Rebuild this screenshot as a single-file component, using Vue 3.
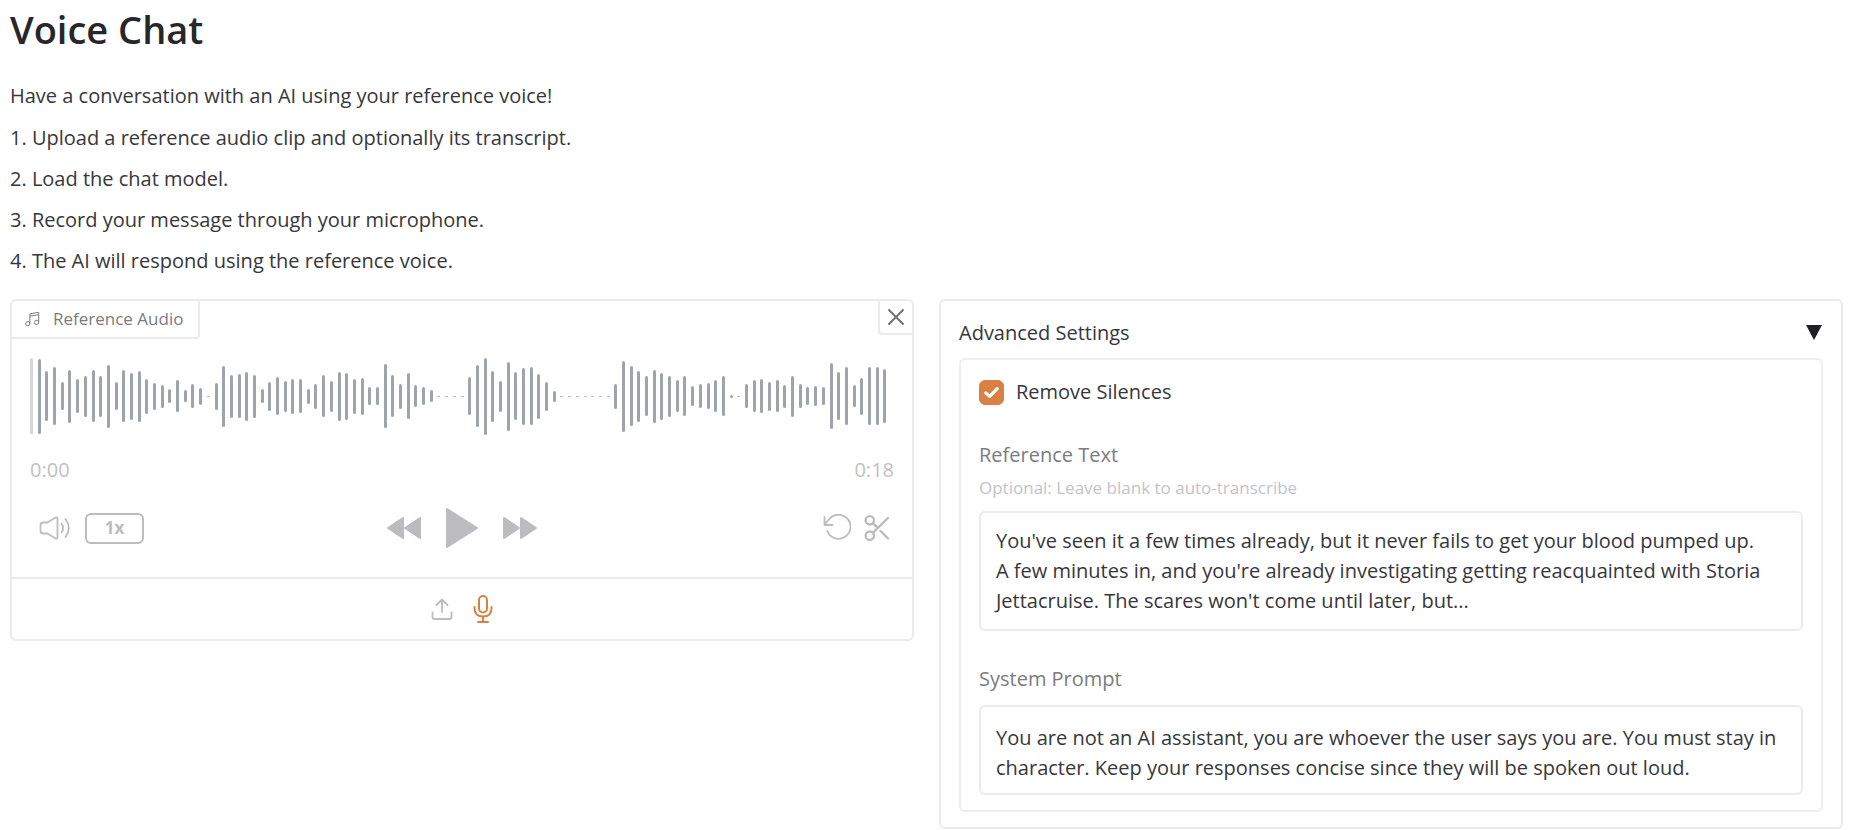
<script setup>
import { ref } from 'vue'

const steps = [
  'Upload a reference audio clip and optionally its transcript.',
  'Load the chat model.',
  'Record your message through your microphone.',
  'The AI will respond using the reference voice.'
]

const bars = [
  76, 75, 50, 58, 28, 53, 34, 41, 52, 41, 63, 28, 52, 47, 51, 35, 27, 23, 14, 32,
  12, 24, 17, 1, 27, 61, 43, 44, 49, 43, 14, 29, 38, 31, 35, 34, 15, 25, 42, 31,
  49, 47, 35, 37, 18, 18, 64, 42, 25, 46, 22, 18, 12, 1, 1, 1, 1, 38, 62, 77,
  51, 31, 69, 48, 57, 58, 45, 29, 11, 1, 1, 1, 1, 1, 1, 1, 25, 71, 60, 51,
  40, 53, 47, 41, 32, 40, 20, 24, 26, 32, 40, 3, 1, 24, 32, 34, 29, 32, 23, 41,
  24, 18, 20, 18, 66, 48, 58, 22, 37, 58, 58, 54
]

const open = ref(true)
const removeSilences = ref(true)
const referenceText = ref(
  "You've seen it a few times already, but it never fails to get your blood pumped up.\nA few minutes in, and you're already investigating getting reacquainted with Storia Jettacruise. The scares won't come until later, but..."
)
const systemPrompt = ref(
  'You are not an AI assistant, you are whoever the user says you are. You must stay in character. Keep your responses concise since they will be spoken out loud.'
)
</script>

<template>
  <main class="page">
    <h1>Voice Chat</h1>
    <p class="intro">Have a conversation with an AI using your reference voice!</p>
    <ol class="steps">
      <li v-for="step in steps" :key="step">{{ step }}</li>
    </ol>

    <div class="columns">
      <section class="panel audio" aria-label="Reference Audio">
        <header class="audio-head">
          <div class="audio-label">
            <svg width="16" height="16" viewBox="0 0 16 16" fill="none" stroke="currentColor" stroke-width="1">
              <circle cx="2.8" cy="12.6" r="2.1" />
              <circle cx="11.6" cy="11.4" r="2.1" />
              <path d="M4.900 12.600V2.800L13.700 1.300V11.400M4.900 5.200L13.700 3.700" />
            </svg>
            <span>Reference Audio</span>
          </div>
          <button class="close" type="button" aria-label="Clear">
            <svg width="16" height="16" viewBox="0 0 16 16" stroke="currentColor" stroke-width="1.8" stroke-linecap="round">
              <path d="M1 1L15 15M15 1L1 15" />
            </svg>
          </button>
        </header>

        <div class="wave">
          <i
            v-for="(h, i) in bars"
            :key="i"
            :class="{ cursor: i === 0, silent: h < 2 }"
            :style="{ height: h + 'px' }"
          ></i>
        </div>
        <div class="times"><time>0:00</time><time>0:18</time></div>

        <div class="controls">
          <div class="group volume">
            <button type="button" class="icon" aria-label="Volume">
              <svg width="32" height="24" viewBox="0 0 32 24" fill="none" stroke="currentColor" stroke-width="1.800" stroke-linecap="round" stroke-linejoin="round">
                <path d="M4.500 6.500H8.500L16.500 1.500Q18.500 .8 18.500 2.800V21.200Q18.500 23.200 16.500 22.500L8.500 17.500H4.500Q1.500 17.500 1.500 14.500V9.500Q1.500 6.500 4.500 6.500Z" />
                <path d="M22.500 7.500Q25.700 12 22.500 16.500M26.500 3Q33.200 12 26.500 21" />
              </svg>
            </button>
            <button type="button" class="speed">1x</button>
          </div>
          <div class="group transport">
            <button type="button" class="icon" aria-label="Skip backwards">
              <svg width="34" height="24" viewBox="0 0 34 24" fill="currentColor" stroke="currentColor" stroke-width="2" stroke-linejoin="round">
                <path d="M16 2V22L1 12ZM33 2V22L18 12Z" />
              </svg>
            </button>
            <button type="button" class="icon" aria-label="Play">
              <svg width="34" height="42" viewBox="0 0 34 42" fill="currentColor" stroke="currentColor" stroke-width="2" stroke-linejoin="round">
                <path d="M2 2V40L32 21Z" />
              </svg>
            </button>
            <button type="button" class="icon" aria-label="Skip forwards">
              <svg width="34" height="24" viewBox="0 0 34 24" fill="currentColor" stroke="currentColor" stroke-width="2" stroke-linejoin="round">
                <path d="M1 2V22L16 12ZM18 2V22L33 12Z" />
              </svg>
            </button>
          </div>
          <div class="group tools">
            <button type="button" class="icon" aria-label="Reset">
              <svg width="28" height="28" viewBox="0 0 28 28" fill="none" stroke="currentColor" stroke-width="1.800" stroke-linecap="round" stroke-linejoin="round">
                <path d="M1.500 3V11H9.500M1.800 10.800Q3.800 7.500 6.200 5.200A12 12 0 1 1 4.300 17" />
              </svg>
            </button>
            <button type="button" class="icon" aria-label="Trim audio">
              <svg width="26" height="28" viewBox="0 0 26 28" fill="none" stroke="currentColor" stroke-width="2.400" stroke-linecap="round">
                <circle cx="5.800" cy="6.300" r="4.200" />
                <circle cx="5.800" cy="21.700" r="4.200" />
                <path d="M9 9.300L13.500 13.500M9 18.700L24 4M16.500 17L24 24.500" />
              </svg>
            </button>
          </div>
        </div>

        <footer class="sources">
          <button type="button" class="icon" aria-label="Upload file">
            <svg width="22" height="22" viewBox="0 0 22 22" fill="none" stroke="currentColor" stroke-width="1.800" stroke-linecap="round" stroke-linejoin="round">
              <path d="M11 14V1.500M5.500 7L11 1.500L16.500 7M1.500 14.500V19Q1.500 21 3.500 21H18.500Q20.500 21 20.500 19V14.500" />
            </svg>
          </button>
          <button type="button" class="icon active" aria-label="Record audio">
            <svg width="20" height="28" viewBox="0 0 20 28" fill="none" stroke="currentColor" stroke-width="2" stroke-linecap="round">
              <rect x="6" y="1" width="8" height="16.500" rx="4" />
              <path d="M1.500 12V13Q1.500 21.500 10 21.500Q18.500 21.500 18.500 13V12M10 21.500V26.500M5 27H15" />
            </svg>
          </button>
        </footer>
      </section>

      <section class="panel settings">
        <button class="accordion" type="button" :aria-expanded="open" @click="open = !open">
          <span>Advanced Settings</span>
          <svg :class="{ closed: !open }" width="18" height="16" viewBox="0 0 18 16" fill="currentColor">
            <path d="M1 0H17L9 15Z" />
          </svg>
        </button>

        <div v-show="open" class="form">
          <label class="check">
            <span class="box">
              <input v-model="removeSilences" type="checkbox" />
              <svg v-if="removeSilences" viewBox="0 0 16 16" fill="none" stroke="#fff" stroke-width="2" stroke-linecap="round" stroke-linejoin="round">
                <path d="M4.300 8.200L6.800 10.500L11.700 5.500" />
              </svg>
            </span>
            <span>Remove Silences</span>
          </label>

          <div class="field">
            <label for="ref-text">Reference Text</label>
            <small id="ref-hint">Optional: Leave blank to auto-transcribe</small>
            <textarea id="ref-text" v-model="referenceText" rows="3" spellcheck="false" aria-describedby="ref-hint"></textarea>
          </div>

          <div class="field prompt">
            <label for="sys-prompt">System Prompt</label>
            <textarea id="sys-prompt" v-model="systemPrompt" rows="2" spellcheck="false"></textarea>
          </div>
        </div>
      </section>
    </div>
  </main>
</template>

<style>
body {
  background: #fff;
}
</style>

<style scoped>
* {
  box-sizing: border-box;
}
.page {
  padding: 3px 6px 0 10px;
  color: #37373b;
  font: 20px/30px "Open Sans", "Noto Sans", sans-serif;
}
h1 {
  margin: 0;
  color: #27272a;
  font-size: 38px;
  font-weight: 600;
  line-height: 52px;
}
.intro {
  margin: 26px 0 0;
}
.steps {
  display: grid;
  gap: 11px;
  margin: 12px 0 23px;
  padding: 0;
  list-style: none;
  counter-reset: step;
}
.steps li {
  counter-increment: step;
}
.steps li::before {
  content: counter(step) ". ";
}
.columns {
  display: grid;
  grid-template-columns: minmax(0, 1fr) minmax(0, 1fr);
  align-items: start;
  gap: 25px;
}
.panel {
  border: 2px solid #ebebed;
  border-radius: 6px;
  background: #fff;
}
button {
  margin: 0;
  padding: 0;
  border: 0;
  background: none;
  color: inherit;
  font: inherit;
  cursor: pointer;
}
svg {
  display: block;
}
.audio-head {
  display: flex;
  align-items: flex-start;
  justify-content: space-between;
}
.audio-label {
  display: flex;
  align-items: center;
  gap: 12px;
  height: 38px;
  padding: 0 15px 0 13px;
  border-right: 2px solid #ebebed;
  border-bottom: 2px solid #ebebed;
  border-bottom-right-radius: 4px;
  color: #7b7b81;
  font-size: 17px;
}
.close {
  padding: 8px;
  border: solid #ebebed;
  border-width: 0 0 2px 2px;
  border-bottom-left-radius: 4px;
  color: #6c6c72;
}
.wave {
  display: flex;
  align-items: center;
  justify-content: space-between;
  height: 78px;
  margin: 18px 25px 0 18px;
}
.wave i {
  width: 3px;
  border-radius: 2px;
  background: #9fa3ab;
}
.wave .cursor {
  background: #d6d5de;
}
.wave .silent {
  background: #b4b7bd;
}
.times {
  display: flex;
  justify-content: space-between;
  margin-top: 20px;
  padding: 0 18px;
  color: #bfbfc3;
}
.controls {
  display: grid;
  grid-template-columns: 1fr auto 1fr;
  align-items: center;
  margin-top: 22px;
  padding: 0 22px 28px;
  color: #bcbcc0;
}
.group {
  display: flex;
  align-items: center;
  gap: 14px;
}
.volume {
  padding-left: 5px;
}
.transport {
  gap: 24px;
}
.tools {
  justify-content: flex-end;
  gap: 13px;
}
.speed {
  width: 59px;
  height: 31px;
  border: 2px solid #bcbcc0;
  border-radius: 6px;
  font-size: 17px;
  font-weight: 700;
  line-height: 26px;
}
.sources {
  display: flex;
  align-items: center;
  justify-content: center;
  gap: 20px;
  height: 62px;
  border-top: 2px solid #ebebed;
  color: #bcbcc0;
}
.active {
  color: #d98145;
}
.settings {
  padding: 17px 18px 15px;
}
.accordion {
  display: flex;
  align-items: center;
  justify-content: space-between;
  width: 100%;
  color: #37373b;
}
.accordion svg {
  color: #202024;
}
.accordion .closed {
  transform: rotate(90deg);
}
.form {
  margin-top: 10px;
  padding: 17px 18px 15px;
  border: 2px solid #eeeef0;
  border-radius: 6px;
}
.check {
  display: flex;
  align-items: center;
  gap: 12px;
}
.box {
  position: relative;
  width: 25px;
  height: 25px;
}
.box input {
  display: block;
  width: 25px;
  height: 25px;
  margin: 0;
  appearance: none;
  border: 1px solid #d4d4d8;
  border-radius: 6px;
}
.box input:checked {
  border-color: #d98145;
  background: #d98145;
}
.box svg {
  position: absolute;
  inset: 0;
  pointer-events: none;
}
.field {
  display: flex;
  flex-direction: column;
  margin-top: 33px;
}
.field label {
  color: #7b7b81;
}
.field small {
  margin: 3px 0 8px;
  color: #c3c3c7;
  font-size: 17px;
  line-height: 30px;
}
.prompt label {
  margin-bottom: 11px;
}
textarea {
  display: block;
  width: 100%;
  margin: 0;
  padding: 13px 15px;
  overflow: hidden;
  border: 2px solid #ebebed;
  border-radius: 6px;
  outline: none;
  background: #fff;
  color: #37373b;
  font: inherit;
  resize: none;
}
.prompt textarea {
  padding-top: 16px;
  padding-bottom: 10px;
}
</style>
